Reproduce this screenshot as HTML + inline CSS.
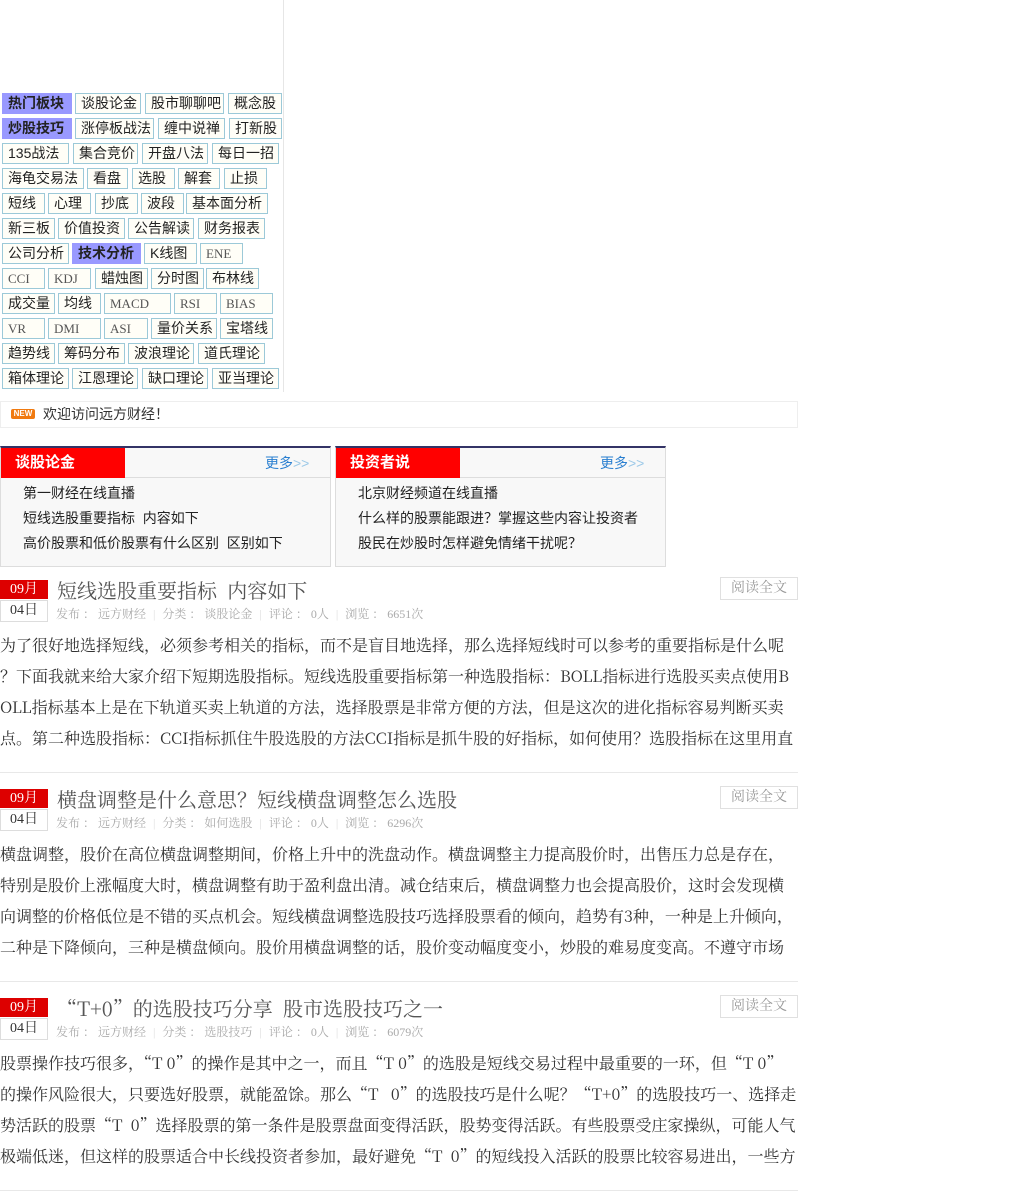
<!DOCTYPE html>
<html><head><meta charset="utf-8"><style>
*{margin:0;padding:0;box-sizing:border-box}
body{width:1024px;height:1200px;background:#fff;font-family:"Liberation Serif","Noto Serif CJK SC",serif;color:#333;position:relative;overflow:hidden}
.vl{position:absolute;left:283px;top:0;width:1px;height:392px;background:#e6e6e6}
.t{position:absolute;height:21px;border:1px solid #9cc9d8;background:#fffef7;font-size:14px;line-height:19px;padding-left:5px;white-space:nowrap;font-family:"Liberation Sans","Noto Sans CJK SC",sans-serif;color:#222}
.t.e{font-family:"Liberation Serif",serif;color:#555;font-size:13px}
.t.h{background:#9999ff;font-weight:bold;border-color:#9999ff}
.news{position:absolute;left:0;top:401px;width:798px;height:27px;border:1px solid #eee;font-size:14px;line-height:25px;padding-left:42px;font-family:"Liberation Sans","Noto Sans CJK SC",sans-serif}
.new{position:absolute;left:10px;top:7px;width:24px;height:10px;background:#f07a10;color:#fff;font-size:8px;line-height:10px;text-align:center;font-weight:bold;border-radius:2px;font-family:"Liberation Sans",sans-serif}
.box{position:absolute;top:446px;width:331px;height:121px;border:1px solid #ddd;border-top:2px solid #333366;background:#f8f8f8;font-family:"Liberation Sans","Noto Sans CJK SC",sans-serif}
.box .hd{height:30px;border-bottom:1px solid #ddd;position:relative}
.box .rd{position:absolute;left:0;top:0;width:124px;height:30px;background:#f00;color:#fff;font-weight:bold;font-size:15px;line-height:30px;padding-left:14px}
.box .more{position:absolute;left:264px;top:5px;font-size:14px;color:#2a7fd0}
.box .more span{color:#9cc9e8}
.box ul{list-style:none;padding:3px 0 0 22px}
.box li{font-size:14px;line-height:25px;color:#222;white-space:nowrap;overflow:hidden}
.art{position:absolute;left:0;width:798px;height:196px;border-bottom:1px solid #e8e8e8}
.mo{position:absolute;left:0;top:3px;width:48px;height:19px;background:#d00;color:#fff;font-size:14px;line-height:19px;text-align:center}
.dy{position:absolute;left:0;top:23px;width:48px;height:22px;border:1px solid #ddd;font-size:14px;line-height:20px;text-align:center;color:#333}
.ti{position:absolute;left:57px;top:0;font-size:20px;color:#555;line-height:26px;white-space:nowrap;font-family:"Noto Serif CJK SC",serif}
.me{position:absolute;left:56px;top:29px;font-size:12px;color:#aaa;white-space:nowrap;line-height:16px}
.me i{font-style:normal;color:#ddd;margin:0 7px}
.rb{position:absolute;left:720px;top:0;width:78px;height:23px;border:1px solid #e0e0e0;color:#999;font-size:14px;line-height:21px;text-align:center}
.bd{position:absolute;left:0;top:52px;width:798px;height:124px;overflow:hidden;font-size:16px;line-height:31px;word-break:break-all;line-break:anywhere;color:#333;font-family:"Noto Serif CJK SC",serif}
.m{font-family:"Liberation Serif",serif;font-size:15px;display:inline-block;transform:scaleX(.8);transform-origin:left;color:#555}
</style></head><body>
<div class="vl"></div>
<div class="t h" style="left:2px;top:93px;width:70px">热门板块</div>
<div class="t" style="left:75px;top:93px;width:66px">谈股论金</div>
<div class="t" style="left:145px;top:93px;width:79px">股市聊聊吧</div>
<div class="t" style="left:228px;top:93px;width:54px">概念股</div>
<div class="t h" style="left:2px;top:118px;width:70px">炒股技巧</div>
<div class="t" style="left:75px;top:118px;width:79px">涨停板战法</div>
<div class="t" style="left:158px;top:118px;width:67px">缠中说禅</div>
<div class="t" style="left:229px;top:118px;width:53px">打新股</div>
<div class="t" style="left:2px;top:143px;width:67px">135战法</div>
<div class="t" style="left:73px;top:143px;width:65px">集合竞价</div>
<div class="t" style="left:142px;top:143px;width:66px">开盘八法</div>
<div class="t" style="left:212px;top:143px;width:67px">每日一招</div>
<div class="t" style="left:2px;top:168px;width:82px">海龟交易法</div>
<div class="t" style="left:87px;top:168px;width:41px">看盘</div>
<div class="t" style="left:132px;top:168px;width:43px">选股</div>
<div class="t" style="left:178px;top:168px;width:42px">解套</div>
<div class="t" style="left:224px;top:168px;width:43px">止损</div>
<div class="t" style="left:2px;top:193px;width:43px">短线</div>
<div class="t" style="left:48px;top:193px;width:43px">心理</div>
<div class="t" style="left:95px;top:193px;width:43px">抄底</div>
<div class="t" style="left:141px;top:193px;width:43px">波段</div>
<div class="t" style="left:186px;top:193px;width:82px">基本面分析</div>
<div class="t" style="left:2px;top:218px;width:53px">新三板</div>
<div class="t" style="left:58px;top:218px;width:67px">价值投资</div>
<div class="t" style="left:128px;top:218px;width:66px">公告解读</div>
<div class="t" style="left:198px;top:218px;width:67px">财务报表</div>
<div class="t" style="left:2px;top:243px;width:67px">公司分析</div>
<div class="t h" style="left:72px;top:243px;width:69px">技术分析</div>
<div class="t" style="left:144px;top:243px;width:53px">K线图</div>
<div class="t e" style="left:200px;top:243px;width:43px">ENE</div>
<div class="t e" style="left:2px;top:268px;width:43px">CCI</div>
<div class="t e" style="left:48px;top:268px;width:43px">KDJ</div>
<div class="t" style="left:95px;top:268px;width:53px">蜡烛图</div>
<div class="t" style="left:151px;top:268px;width:53px">分时图</div>
<div class="t" style="left:206px;top:268px;width:53px">布林线</div>
<div class="t" style="left:2px;top:293px;width:53px">成交量</div>
<div class="t" style="left:58px;top:293px;width:43px">均线</div>
<div class="t e" style="left:104px;top:293px;width:67px">MACD</div>
<div class="t e" style="left:174px;top:293px;width:43px">RSI</div>
<div class="t e" style="left:220px;top:293px;width:53px">BIAS</div>
<div class="t e" style="left:2px;top:318px;width:43px">VR</div>
<div class="t e" style="left:48px;top:318px;width:53px">DMI</div>
<div class="t e" style="left:104px;top:318px;width:44px">ASI</div>
<div class="t" style="left:151px;top:318px;width:66px">量价关系</div>
<div class="t" style="left:220px;top:318px;width:53px">宝塔线</div>
<div class="t" style="left:2px;top:343px;width:53px">趋势线</div>
<div class="t" style="left:58px;top:343px;width:67px">筹码分布</div>
<div class="t" style="left:128px;top:343px;width:66px">波浪理论</div>
<div class="t" style="left:198px;top:343px;width:67px">道氏理论</div>
<div class="t" style="left:2px;top:368px;width:67px">箱体理论</div>
<div class="t" style="left:72px;top:368px;width:66px">江恩理论</div>
<div class="t" style="left:142px;top:368px;width:66px">缺口理论</div>
<div class="t" style="left:212px;top:368px;width:67px">亚当理论</div>

<div class="news"><span class="new">NEW</span>欢迎访问远方财经！</div>

<div class="box" style="left:0"><div class="hd"><div class="rd">谈股论金</div><div class="more">更多<span>&gt;&gt;</span></div></div>
<ul><li>第一财经在线直播</li><li>短线选股重要指标&nbsp; 内容如下</li><li>高价股票和低价股票有什么区别&nbsp; 区别如下</li></ul></div>
<div class="box" style="left:335px"><div class="hd"><div class="rd">投资者说</div><div class="more">更多<span>&gt;&gt;</span></div></div>
<ul><li>北京财经频道在线直播</li><li>什么样的股票能跟进？掌握这些内容让投资者</li><li>股民在炒股时怎样避免情绪干扰呢？</li></ul></div>

<div class="art" style="top:577px"><div class="mo">09月</div><div class="dy">04日</div>
<div class="ti">短线选股重要指标&nbsp; 内容如下</div><div class="rb">阅读全文</div>
<div class="me">发布 ： 远方财经<i>|</i>分类 ： 谈股论金<i>|</i>评论 ： 0人<i>|</i>浏览 ： 6651次</div>
<div class="bd">为了很好地选择短线，必须参考相关的指标，而不是盲目地选择，那么选择短线时可以参考的重要指标是什么呢？下面我就来给大家介绍下短期选股指标。短线选股重要指标第一种选股指标：BOLL指标进行选股买卖点使用BOLL指标基本上是在下轨道买卖上轨道的方法，选择股票是非常方便的方法，但是这次的进化指标容易判断买卖点。第二种选股指标：CCI指标抓住牛股选股的方法CCI指标是抓牛股的好指标，如何使用？选股指标在这里用直接选股</div></div>

<div class="art" style="top:786px"><div class="mo">09月</div><div class="dy">04日</div>
<div class="ti">横盘调整是什么意思？短线横盘调整怎么选股</div><div class="rb">阅读全文</div>
<div class="me">发布 ： 远方财经<i>|</i>分类 ： 如何选股<i>|</i>评论 ： 0人<i>|</i>浏览 ： 6296次</div>
<div class="bd">横盘调整，股价在高位横盘调整期间，价格上升中的洗盘动作。横盘调整主力提高股价时，出售压力总是存在，<br>特别是股价上涨幅度大时，横盘调整有助于盈利盘出清。减仓结束后，横盘调整力也会提高股价，这时会发现横向调整的价格低位是不错的买点机会。短线横盘调整选股技巧选择股票看的倾向，趋势有3种，一种是上升倾向，二种是下降倾向，三种是横盘倾向。股价用横盘调整的话，股价变动幅度变小，炒股的难易度变高。不遵守市场</div></div>

<div class="art" style="top:995px"><div class="mo">09月</div><div class="dy">04日</div>
<div class="ti">“T+0”的选股技巧分享&nbsp; 股市选股技巧之一</div><div class="rb">阅读全文</div>
<div class="me">发布 ： 远方财经<i>|</i>分类 ： 选股技巧<i>|</i>评论 ： 0人<i>|</i>浏览 ： 6079次</div>
<div class="bd">股票操作技巧很多，“T 0”的操作是其中之一，而且“T 0”的选股是短线交易过程中最重要的一环，但“T 0”的操作风险很大，只要选好股票，就能盈馀。那么“T&nbsp;&nbsp; 0”的选股技巧是什么呢？“T+0”的选股技巧一、选择走势活跃的股票“T&nbsp; 0”选择股票的第一条件是股票盘面变得活跃，股势变得活跃。有些股票受庄家操纵，可能人气极端低迷，但这样的股票适合中长线投资者参加，最好避免“T&nbsp; 0”的短线投入活跃的股票比较容易进出，一些方法</div></div>
</body></html>
